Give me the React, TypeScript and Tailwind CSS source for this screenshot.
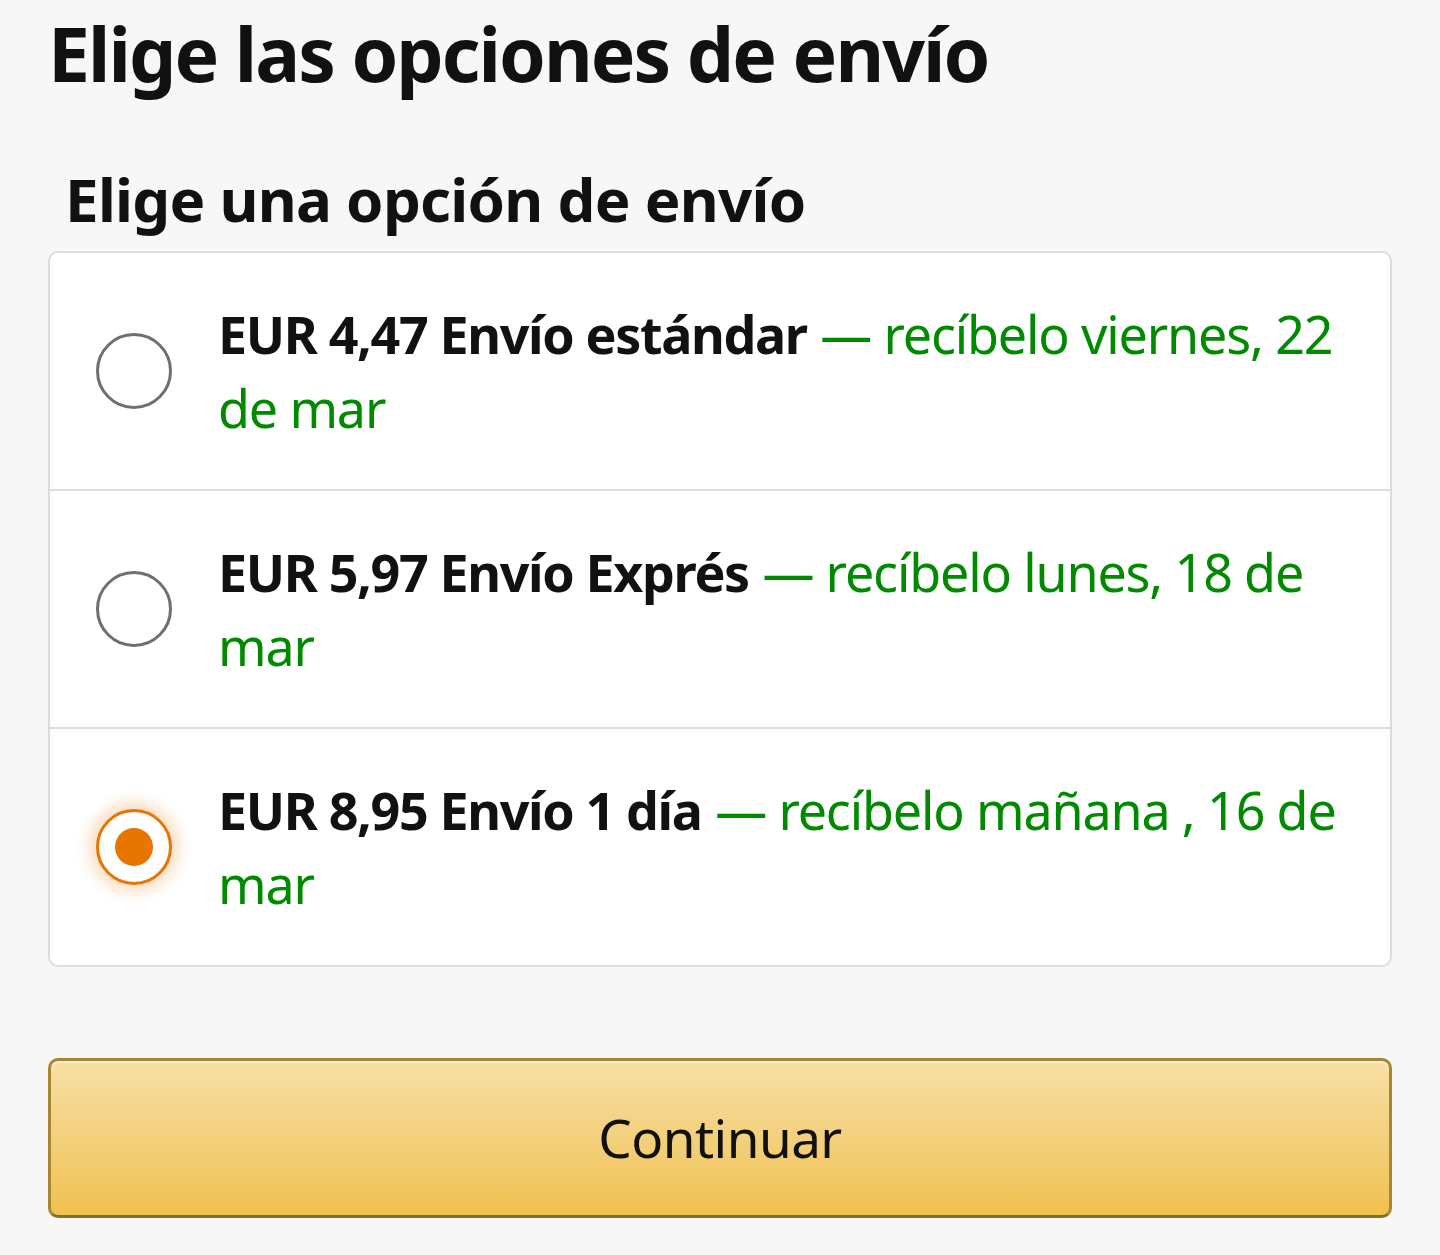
import { useState } from "react";

interface ShippingOption {
  id: string;
  price: string;
  name: string;
  delivery: string;
}

const options: ShippingOption[] = [
  { id: "std", price: "EUR 4,47", name: "Envío estándar", delivery: "recíbelo viernes, 22 de mar" },
  { id: "exp", price: "EUR 5,97", name: "Envío Exprés", delivery: "recíbelo lunes, 18 de mar" },
  { id: "one", price: "EUR 8,95", name: "Envío 1 día", delivery: "recíbelo mañana , 16 de mar" },
];

function Radio({ checked }: { checked: boolean }) {
  if (checked) {
    return (
      <span className="flex h-[76px] w-[76px] items-center justify-center rounded-full border-[3px] border-[#e77600] bg-white shadow-[0_0_14px_7px_rgba(243,170,100,0.4)]">
        <span className="h-[38px] w-[38px] rounded-full bg-[#e77600]" />
      </span>
    );
  }
  return <span className="block h-[76px] w-[76px] rounded-full border-[3px] border-[#6f6f6f] bg-white" />;
}

export default function App() {
  const [selected, setSelected] = useState("one");

  return (
    <div className="min-h-[1255px] bg-[#f7f7f7] px-[48px] pt-[3px] font-['Noto_Sans',sans-serif] text-[#111]">
      <h1 className="text-[75px] font-bold leading-[100px] tracking-[-0.026em]">Elige las opciones de envío</h1>

      <h2 className="mt-[56px] pl-[17px] text-[60px] font-bold leading-[80px] tracking-[-0.012em]">
        Elige una opción de envío
      </h2>

      <div className="mt-[12px] overflow-hidden rounded-[10px] border-2 border-[#dddddd] bg-white">
        {options.map((opt, i) => (
          <button
            key={opt.id}
            type="button"
            onClick={() => setSelected(opt.id)}
            className={`flex w-full items-center py-[44px] pr-[40px] text-left ${i > 0 ? "border-t-2 border-[#dddddd]" : ""}`}
          >
            <span className="flex w-[168px] shrink-0 justify-center">
              <Radio checked={selected === opt.id} />
            </span>
            <span className="text-[52px] leading-[74px]">
              <span className="font-bold tracking-[-0.026em]">
                {opt.price} {opt.name}
              </span>{" "}
              <span className="tracking-[-0.022em] text-[#008a00]">— {opt.delivery}</span>
            </span>
          </button>
        ))}
      </div>

      <button
        type="button"
        className="mt-[91px] flex h-[160px] w-full items-center justify-center rounded-[10px] border-[3px] border-[#a88734] border-b-[#846f29] bg-gradient-to-b from-[#f7dfa5] to-[#f0c14b] text-[53px] tracking-[-0.01em] text-[#111] shadow-[inset_0_2px_0_rgba(255,255,255,0.5)]"
      >
        Continuar
      </button>
    </div>
  );
}
